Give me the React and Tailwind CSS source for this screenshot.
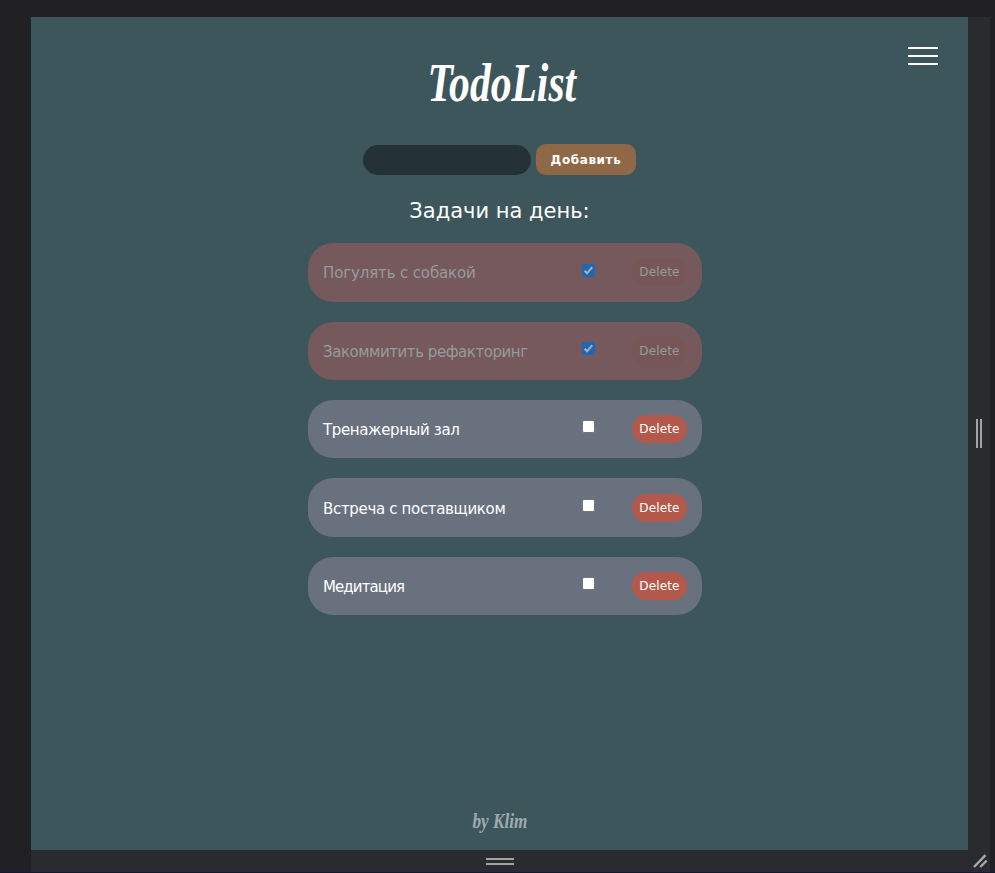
const tasks = [
  { title: 'Погулять с собакой', done: true, text: 'tracking-[-0.13px]' },
  { title: 'Закоммитить рефакторинг', done: true, text: 'tracking-[-0.45px]' },
  { title: 'Тренажерный зал', done: false, text: 'tracking-[-0.38px]' },
  { title: 'Встреча с поставщиком', done: false, text: 'tracking-[-0.33px]' },
  { title: 'Медитация', done: false, text: 'tracking-[-0.9px]' },
];

function Checkbox({ checked }) {
  if (!checked) {
    return <span className="block size-[13px] rounded-[2px] border border-[#767676] bg-white" />;
  }
  return (
    <svg className="block size-[13px]" viewBox="0 0 13 13">
      <rect width="13" height="13" rx="2" fill="#1f67b4" />
      <path d="M2.6 6.8 5.1 9.3 10.2 3.2" fill="none" stroke="#aab1b3" strokeWidth="2" />
    </svg>
  );
}

function Task({ task }) {
  return (
    <li
      className={`flex h-[58.4px] items-center rounded-[25px] px-[15px] ${
        task.done ? 'bg-[#75595d] text-[#969b9d]' : 'bg-[#69717f] text-white'
      }`}
    >
      <span className={`w-[259px] whitespace-nowrap pt-[2px] text-[15px] leading-5 ${task.text}`}>{task.title}</span>
      <span className="mb-[4.6px]">
        <Checkbox checked={task.done} />
      </span>
      <button
        className={`ml-auto h-7 w-[55px] rounded-[15px] text-center text-[12px] leading-7 tracking-[0.15px] ${
          task.done ? 'bg-[#775755]' : 'bg-[#b2594c]'
        }`}
      >
        Delete
      </button>
    </li>
  );
}

export default function App() {
  return (
    <div className="flex h-[873px] w-[995px] flex-col overflow-hidden border-b border-[#15162f] bg-[#212123] pl-[31px] pr-[5px] pt-[17px] font-['DejaVu_Sans',sans-serif] text-white">
      <div className="flex h-[833px]">
        <main className="relative flex w-[937px] flex-col items-center bg-[#3d565c]">
          <button className="absolute right-[30px] top-[30px] flex w-[30px] flex-col gap-[6px]">
            <span className="h-[2px] bg-white" />
            <span className="h-[2px] bg-white" />
            <span className="h-[2px] bg-white" />
          </button>
          <h1 className="mt-[34px] h-[64px] origin-center scale-x-[0.77] whitespace-nowrap pl-[6px] font-['Liberation_Serif',serif] text-[54px] font-bold italic leading-[64px]">
            TodoList
          </h1>
          <form className="mt-[29px] flex h-[31px] items-end gap-[5px]">
            <span className="h-[30px] w-[168px] rounded-[15px] bg-[#243236]" />
            <button type="button" className="h-[31px] w-[100px] rounded-[10px] bg-[#8f6847] text-[12px] font-bold leading-8 tracking-[0.6px]">
              Добавить
            </button>
          </form>
          <h2 className="mt-[22px] h-[28px] whitespace-nowrap text-[21px] leading-7">Задачи на день:</h2>
          <ul className="ml-[11px] mt-[18.2px] flex w-[394px] flex-col gap-5">
            {tasks.map((task) => (
              <Task key={task.title} task={task} />
            ))}
          </ul>
          <footer className="mb-[17px] mt-auto scale-x-[0.86] whitespace-nowrap font-['Liberation_Serif',serif] text-[20px] font-bold italic leading-6 text-[#9eaaad]">
            by Klim
          </footer>
        </main>
        <aside className="flex w-[22px] items-center justify-center gap-[2px] bg-[#2a2b2e]">
          <span className="h-[29px] w-[2px] bg-[#a3a3a4]" />
          <span className="h-[29px] w-[2px] bg-[#a3a3a4]" />
        </aside>
      </div>
      <div className="flex flex-1 items-center bg-[#2a2b2e]">
        <div className="flex w-[937px] flex-col items-center gap-[3px]">
          <span className="h-[2px] w-[28px] bg-[#a3a3a4]" />
          <span className="h-[2px] w-[28px] bg-[#a3a3a4]" />
        </div>
        <svg className="ml-[5px] h-[14px] w-[15px]" viewBox="0 0 15 14" fill="none" stroke="#a9a9aa" strokeWidth="2.4">
          <path d="M1 13 12.5 1.2M7.3 13 13.7 6.5" />
        </svg>
      </div>
    </div>
  );
}
